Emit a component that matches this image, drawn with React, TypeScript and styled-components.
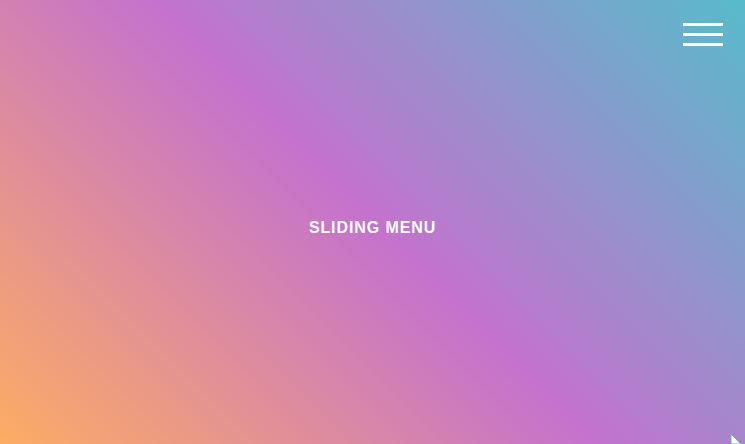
import styled, { createGlobalStyle } from "styled-components";

const GlobalStyle = createGlobalStyle`
  html, body, #root {
    margin: 0;
    padding: 0;
    height: 100%;
  }
  body {
    font-family: "Liberation Sans", Arial, sans-serif;
    overflow: hidden;
  }
`;

function App() {
  return (
    <>
      <GlobalStyle />
      <Page>
        <Burger aria-label="Open menu">
          <Line />
          <Line />
          <Line />
        </Burger>
        <Title>SLIDING MENU</Title>
        <Pointer viewBox="0 0 11 10" aria-hidden="true">
          <polygon points="1,0 11,10 1,10" fill="#ffffff" stroke="#5ab8cc" strokeWidth="1" />
        </Pointer>
      </Page>
    </>
  );
}

export default App;

const Page = styled.main`
  position: relative;
  width: 100%;
  height: 100vh;
  display: flex;
  align-items: center;
  justify-content: center;
  background: linear-gradient(45deg, #fdac63 0%, #c472cd 50%, #57bbcb 100%);
  overflow: hidden;
`;

const Burger = styled.button`
  position: absolute;
  top: 23px;
  right: 22px;
  width: 40px;
  padding: 0;
  border: none;
  background: transparent;
  display: flex;
  flex-direction: column;
  gap: 7px;
  cursor: pointer;
`;

const Line = styled.span`
  display: block;
  width: 40px;
  height: 3px;
  background: #ffffff;
`;

const Title = styled.h1`
  margin: 12px 0 0;
  color: #ffffff;
  font-size: 16px;
  font-weight: 700;
  letter-spacing: 0.9px;
`;

const Pointer = styled.svg`
  position: absolute;
  right: 4px;
  bottom: 0;
  width: 11px;
  height: 10px;
`;
